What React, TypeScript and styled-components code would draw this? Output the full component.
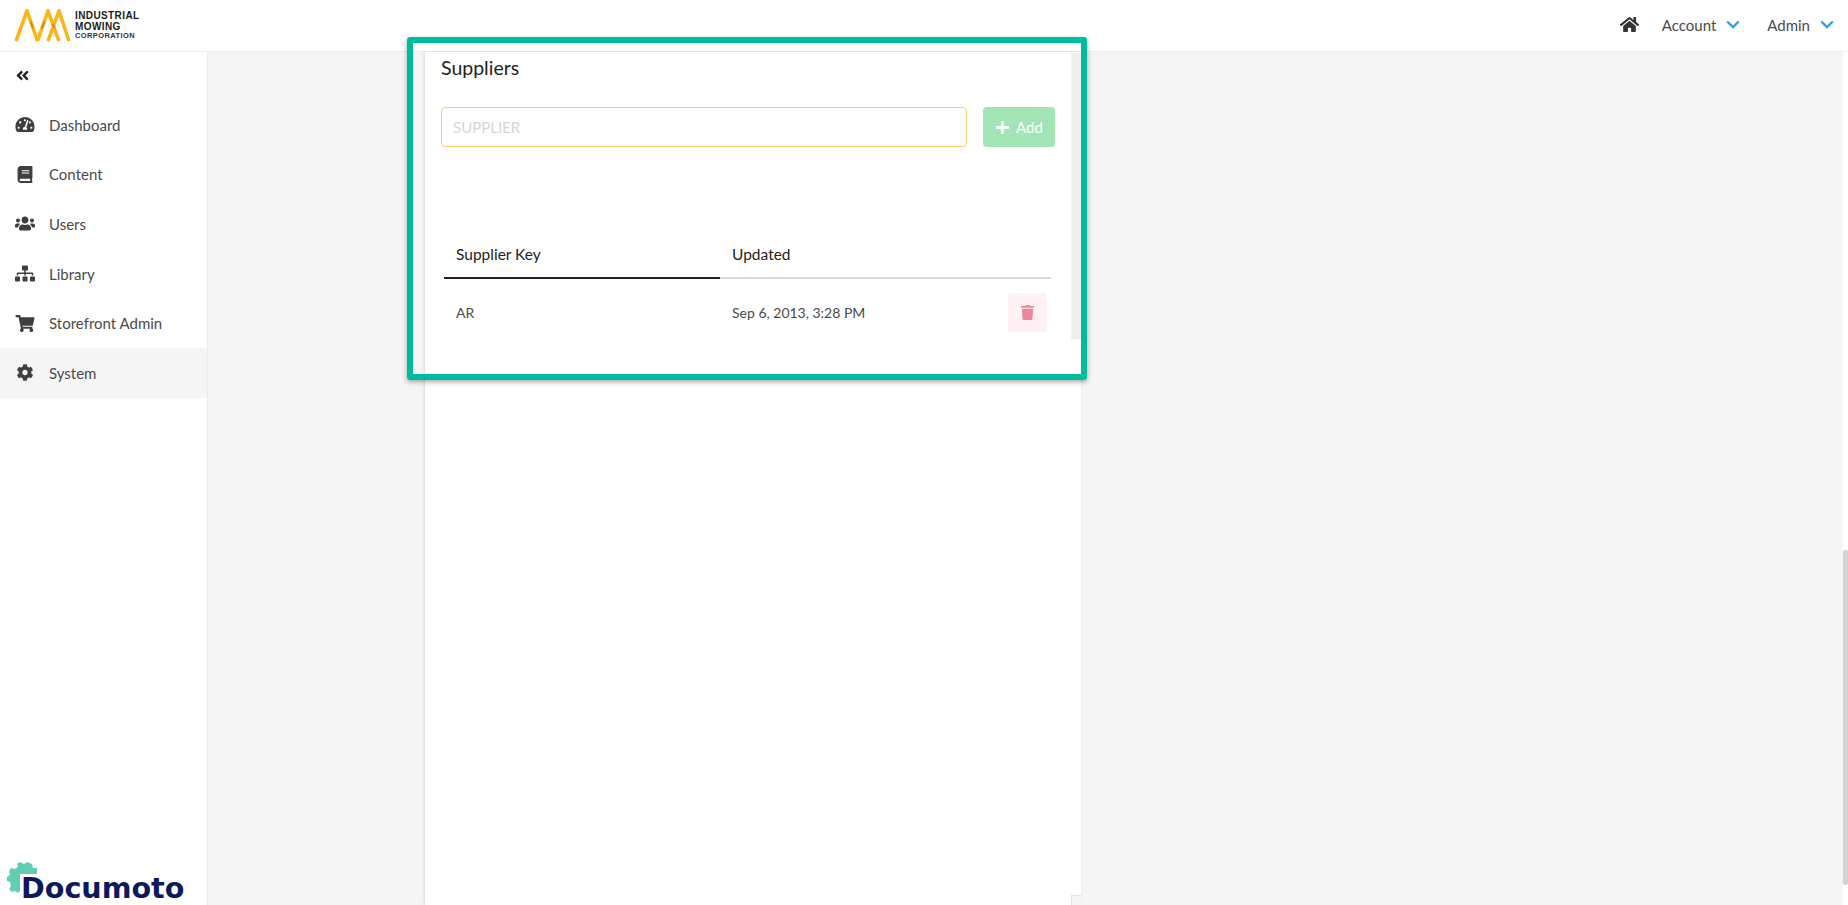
import styled, { createGlobalStyle } from 'styled-components';
import {
  FaAngleDoubleLeft,
  FaBook,
  FaCog,
  FaHome,
  FaPlus,
  FaShoppingCart,
  FaSitemap,
  FaTachometerAlt,
  FaTrash,
  FaUsers,
} from 'react-icons/fa';

const GlobalStyle = createGlobalStyle`
  html, body {
    margin: 0;
    height: 100%;
    overflow: hidden;
  }
  body {
    font-family: Lato, "Noto Sans", sans-serif;
    color: #4a4a4a;
  }
`;

const Page = styled.div`
  position: relative;
  display: flex;
  flex-direction: column;
  height: 905px;
  background: #fff;
`;

const Header = styled.header`
  display: flex;
  align-items: center;
  justify-content: space-between;
  height: 51px;
  padding: 0 14px 0 14px;
  border-bottom: 1px solid #ececec;
  flex-shrink: 0;
`;

const Logo = styled.div`
  display: flex;
  align-items: center;
  gap: 4px;
`;

const LogoText = styled.div`
  display: flex;
  flex-direction: column;
  font-family: "Liberation Sans", sans-serif;
  font-weight: 700;
  font-size: 10px;
  line-height: 10.5px;
  color: #1c1c1c;
  letter-spacing: 0.4px;
  > small {
    font-size: 7.5px;
    line-height: 8px;
    font-weight: 700;
    color: #333;
  }
`;

const TopNav = styled.nav`
  display: flex;
  align-items: center;
  font-size: 15px;
  margin-top: -2px;
`;

const HomeLink = styled.span`
  display: flex;
  font-size: 19px;
  color: #333;
  margin-right: 23px;
`;

const NavLink = styled.span`
  display: flex;
  align-items: center;
  gap: 10px;
  & + & {
    margin-left: 27px;
  }
`;

const Body = styled.div`
  display: flex;
  flex: 1;
  min-height: 0;
`;

const Sidebar = styled.aside`
  display: flex;
  flex-direction: column;
  width: 207px;
  border-right: 1px solid #ececec;
  flex-shrink: 0;
`;

const Collapse = styled.div`
  display: flex;
  height: 48px;
  padding: 16px 0 0 15px;
  box-sizing: border-box;
  font-size: 15px;
  color: #222;
`;

const MenuItem = styled.div<{ $active?: boolean }>`
  display: flex;
  align-items: center;
  height: 49.6px;
  padding-left: 15px;
  font-size: 15px;
  background: ${(p) => (p.$active ? '#f5f5f5' : 'transparent')};
  > svg {
    width: 20px;
    height: 17px;
    margin-right: 14px;
    color: #3f3f3f;
  }
`;

const Brand = styled.div`
  position: relative;
  margin-top: auto;
  display: flex;
  align-items: flex-end;
  height: 43px;
  padding: 0 0 1px 21px;
  font-family: "DejaVu Sans", sans-serif;
  font-weight: 700;
  font-size: 28.6px;
  line-height: 32px;
  color: #0c1a5c;
  > svg {
    position: absolute;
    left: 6px;
    top: 0;
  }
  > span {
    position: relative;
  }
`;

const Main = styled.main`
  flex: 1;
  display: flex;
  background: #f5f5f5;
  padding-left: 217px;
  min-width: 0;
`;

const Card = styled.section`
  position: relative;
  box-sizing: border-box;
  width: 656px;
  background: #fff;
  padding: 0 26px 0 16px;
  box-shadow: -1px 0 3px rgba(0, 0, 0, 0.1);
`;

const CardScroll = styled.div`
  position: absolute;
  top: 1px;
  right: 0;
  width: 10px;
  height: 286px;
  background: #efefef;
`;

const CardNotch = styled.div`
  position: absolute;
  bottom: 0;
  right: 0;
  width: 10px;
  height: 10px;
  background: #f5f5f5;
  box-shadow: inset 1px 1px 1px rgba(0, 0, 0, 0.08);
`;

const Title = styled.h2`
  margin: 0;
  padding-top: 2px;
  font-size: 19.5px;
  line-height: 28px;
  font-weight: 400;
  color: #222;
`;

const AddRow = styled.div`
  display: flex;
  gap: 16px;
  margin-top: 25px;
`;

const SupplierInput = styled.input`
  flex: 1;
  box-sizing: border-box;
  height: 40px;
  padding: 0 11px;
  border: 1px solid #f6cd6b;
  border-radius: 4px;
  outline: none;
  font-family: inherit;
  font-size: 15px;
  &::placeholder {
    color: #d5d5d5;
    opacity: 1;
  }
`;

const AddButton = styled.button`
  display: flex;
  align-items: center;
  justify-content: center;
  gap: 6px;
  width: 72px;
  height: 40px;
  border: 0;
  border-radius: 4px;
  background: #a3e4b7;
  color: #fff;
  font-family: inherit;
  font-size: 15px;
`;

const Table = styled.table`
  width: 607px;
  margin: 83px 0 0 3px;
  border-collapse: collapse;
  table-layout: fixed;
`;

const HeadCell = styled.th<{ $width?: number; $dark?: boolean }>`
  width: ${(p) => (p.$width ? `${p.$width}px` : 'auto')};
  height: 48px;
  padding: 0 12px;
  box-sizing: border-box;
  border-bottom: 2px solid ${(p) => (p.$dark ? '#222' : '#d8d8d8')};
  text-align: left;
  font-weight: 400;
  font-size: 15.5px;
  color: #222;
`;

const Cell = styled.td`
  height: 66px;
  padding: 0 12px;
  font-size: 14px;
`;

const ActionCell = styled(Cell)`
  padding: 0 4px 0 0;
`;

const DeleteButton = styled.button`
  display: flex;
  align-items: center;
  justify-content: center;
  width: 39px;
  height: 39px;
  margin-left: auto;
  border: 0;
  border-radius: 4px;
  background: #fef0f3;
  color: #e8879c;
  font-size: 15px;
`;

const Highlight = styled.div`
  position: absolute;
  left: 407px;
  top: 37px;
  width: 680px;
  height: 343px;
  box-sizing: border-box;
  border: 6px solid #00bc9e;
  border-radius: 3px;
  box-shadow: 0 2px 5px rgba(0, 0, 0, 0.35);
  pointer-events: none;
`;

const PageScroll = styled.div`
  position: absolute;
  right: 0;
  top: 52px;
  bottom: 0;
  width: 5px;
  background: #fff;
  &::after {
    content: '';
    position: absolute;
    top: 498px;
    left: 0;
    width: 100%;
    height: 335px;
    border-radius: 2px;
    background: #d3d3d3;
  }
`;

const Chevron = () => (
  <svg width="14" height="9" viewBox="0 0 14 9" fill="none" stroke="#2f9fe6" strokeWidth="2.4">
    <path d="M1.2 1.5 7 7l5.8-5.5" />
  </svg>
);

const menu = [
  { label: 'Dashboard', icon: <FaTachometerAlt /> },
  { label: 'Content', icon: <FaBook /> },
  { label: 'Users', icon: <FaUsers /> },
  { label: 'Library', icon: <FaSitemap /> },
  { label: 'Storefront Admin', icon: <FaShoppingCart /> },
  { label: 'System', icon: <FaCog />, active: true },
];

function App() {
  return (
    <Page>
      <GlobalStyle />
      <Header>
        <Logo>
          <svg width="57" height="33" viewBox="0 0 57 33" fill="none" stroke="#fdb515" strokeWidth="3.6">
            <path d="M2 32 13 2l10.500 30" />
            <path d="M23.500 32 34 2l11 30" />
            <path d="M34 32 45 2l10 30" />
            <path d="M16.700 12.500l2.400 7M30.300 12.500l-2.400 7M38.500 15l2 4" stroke="#c98f16" strokeWidth="2" />
          </svg>
          <LogoText>
            <span>INDUSTRIAL</span>
            <span>MOWING</span>
            <small>CORPORATION</small>
          </LogoText>
        </Logo>
        <TopNav>
          <HomeLink>
            <FaHome />
          </HomeLink>
          <NavLink>
            Account <Chevron />
          </NavLink>
          <NavLink>
            Admin <Chevron />
          </NavLink>
        </TopNav>
      </Header>
      <Body>
        <Sidebar>
          <Collapse>
            <FaAngleDoubleLeft />
          </Collapse>
          {menu.map((item) => (
            <MenuItem key={item.label} $active={item.active}>
              {item.icon}
              {item.label}
            </MenuItem>
          ))}
          <Brand>
            <svg width="32" height="34" viewBox="0 0 32 34">
              <path
                fill="#63cdb4"
                d="M14 13 31 13 31 7 27 7 26 3 21 1 18 3 14 1 11 3 12 6 8 8 5 7 3 10 4 14 1 16 1 20 4 21 5 25 3 28 6 31 9 30 12 32 14 30Z"
              />
            </svg>
            <span>Documoto</span>
          </Brand>
        </Sidebar>
        <Main>
          <Card>
            <CardScroll />
            <Title>Suppliers</Title>
            <AddRow>
              <SupplierInput placeholder="SUPPLIER" />
              <AddButton>
                <FaPlus /> Add
              </AddButton>
            </AddRow>
            <Table>
              <thead>
                <tr>
                  <HeadCell $width={276} $dark>
                    Supplier Key
                  </HeadCell>
                  <HeadCell $width={232}>Updated</HeadCell>
                  <HeadCell />
                </tr>
              </thead>
              <tbody>
                <tr>
                  <Cell>AR</Cell>
                  <Cell>Sep 6, 2013, 3:28 PM</Cell>
                  <ActionCell>
                    <DeleteButton>
                      <FaTrash />
                    </DeleteButton>
                  </ActionCell>
                </tr>
              </tbody>
            </Table>
            <CardNotch />
          </Card>
        </Main>
      </Body>
      <Highlight />
      <PageScroll />
    </Page>
  );
}

export default App;
